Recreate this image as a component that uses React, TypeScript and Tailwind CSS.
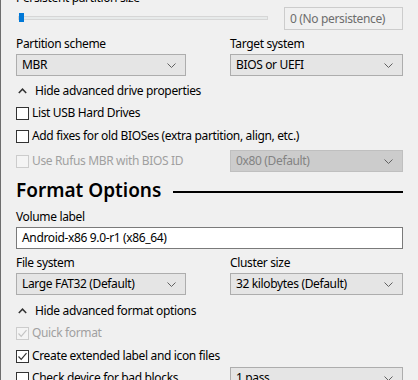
import React from "react";

const font = { fontFamily: '"Segoe UI", "Noto Sans", "Liberation Sans", sans-serif' };

function Chevron() {
  return (
    <svg width="9" height="5" viewBox="0 0 9 5" className="shrink-0">
      <path d="M0.5 0.5 L4.5 4.5 L8.5 0.5" fill="none" stroke="#606060" strokeWidth="1" />
    </svg>
  );
}

function Combo({ value, disabled = false }: { value: string; disabled?: boolean }) {
  return (
    <div
      className={
        "h-[22px] w-full flex items-center justify-between pl-[5px] pr-[9px] border whitespace-nowrap " +
        (disabled
          ? "bg-[#cccccc] border-[#bfbfbf] text-[#838383]"
          : "bg-[#e5e5e5] border-[#adadad] text-black")
      }
    >
      <span>{value}</span>
      <Chevron />
    </div>
  );
}

function Box({ checked = false, disabled = false }: { checked?: boolean; disabled?: boolean }) {
  return (
    <div
      className={
        "w-[13px] h-[13px] border shrink-0 flex items-center justify-center " +
        (disabled ? "border-[#cccccc] bg-[#f4f4f4]" : "border-[#333333] bg-white")
      }
    >
      {checked && (
        <svg width="11" height="11" viewBox="0 0 11 11">
          <path
            d="M1.5 5.5 L4.2 8.3 L9.5 2.2"
            fill="none"
            stroke={disabled ? "#c4c4c4" : "#333333"}
            strokeWidth="1.2"
          />
        </svg>
      )}
    </div>
  );
}

function Check({ label, checked, disabled }: { label: string; checked?: boolean; disabled?: boolean }) {
  return (
    <div className="flex items-center gap-[3px] h-[22px] whitespace-nowrap">
      <Box checked={checked} disabled={disabled} />
      <span className={disabled ? "text-[#a0a0a0]" : ""}>{label}</span>
    </div>
  );
}

function Toggle({ label }: { label: string }) {
  return (
    <div className="flex items-center h-[16px] pl-[2px]">
      <svg width="9" height="6" viewBox="0 0 9 6" className="mr-[8px]">
        <path d="M0.8 5 L4.5 1.2 L8.2 5" fill="none" stroke="#333333" strokeWidth="1.5" />
      </svg>
      <span>{label}</span>
    </div>
  );
}

export default function App() {
  return (
    <div
      style={font}
      className="w-[418px] h-[380px] overflow-hidden bg-[#f0f0f0] border-l border-[#6e6e6e] pl-[15px] pr-[15px] text-[12px] leading-[16px] tracking-[-0.35px] text-black"
    >
      <div className="h-[16px] mt-[-10px]">Persistent partition size</div>

      <div className="flex items-center h-[23px] mt-[1px]">
        <div className="relative w-[254px] h-[23px]">
          <div className="absolute left-[2px] right-[2px] top-[9px] h-[4px] bg-[#e7eaea] border border-[#d6d6d6]" />
          <div className="absolute left-[3px] top-[6px] w-[5px] h-[9px] bg-[#0078d7]" />
        </div>
        <div className="ml-auto w-[119px] h-[23px] border border-[#cccccc] flex items-center pl-[5px] text-[#6d6d6d]">
          0 (No persistence)
        </div>
      </div>

      <div className="grid grid-cols-[170px_173px] gap-x-[44px] mt-[6px]">
        <div className="h-[16px]">Partition scheme</div>
        <div className="h-[16px]">Target system</div>
        <div className="mt-[2px]">
          <Combo value="MBR" />
        </div>
        <div className="mt-[2px]">
          <Combo value="BIOS or UEFI" />
        </div>
      </div>

      <div className="mt-[7px]">
        <Toggle label="Hide advanced drive properties" />
      </div>
      <div className="mt-[3px]">
        <Check label="List USB Hard Drives" />
      </div>
      <div className="mt-[1px]">
        <Check label="Add fixes for old BIOSes (extra partition, align, etc.)" />
      </div>
      <div className="grid grid-cols-[170px_173px] gap-x-[44px] mt-[3px] items-center">
        <Check label="Use Rufus MBR with BIOS ID" disabled />
        <Combo value="0x80 (Default)" disabled />
      </div>

      <div className="flex items-center h-[26px] mt-[5px]">
        <span className="text-[19px] leading-[26px] font-semibold tracking-normal">Format Options</span>
        <div className="flex-1 ml-[12px] h-[2px] bg-black mt-[3px]" />
      </div>

      <div className="h-[16px] mt-[6px]">Volume label</div>
      <div className="h-[22px] mt-[2px] bg-white border border-[#7a7a7a] flex items-center pl-[5px]">
        Android-x86 9.0-r1 (x86_64)
      </div>

      <div className="grid grid-cols-[170px_173px] gap-x-[44px] mt-[6px]">
        <div className="h-[16px]">File system</div>
        <div className="h-[16px]">Cluster size</div>
        <div className="mt-[2px]">
          <Combo value="Large FAT32 (Default)" />
        </div>
        <div className="mt-[2px]">
          <Combo value="32 kilobytes (Default)" />
        </div>
      </div>

      <div className="mt-[8px]">
        <Toggle label="Hide advanced format options" />
      </div>
      <div className="mt-[3px]">
        <Check label="Quick format" checked disabled />
      </div>
      <div className="mt-[1px]">
        <Check label="Create extended label and icon files" checked />
      </div>
      <div className="grid grid-cols-[170px_173px] gap-x-[44px] items-center">
        <Check label="Check device for bad blocks" />
        <Combo value="1 pass" />
      </div>
    </div>
  );
}
